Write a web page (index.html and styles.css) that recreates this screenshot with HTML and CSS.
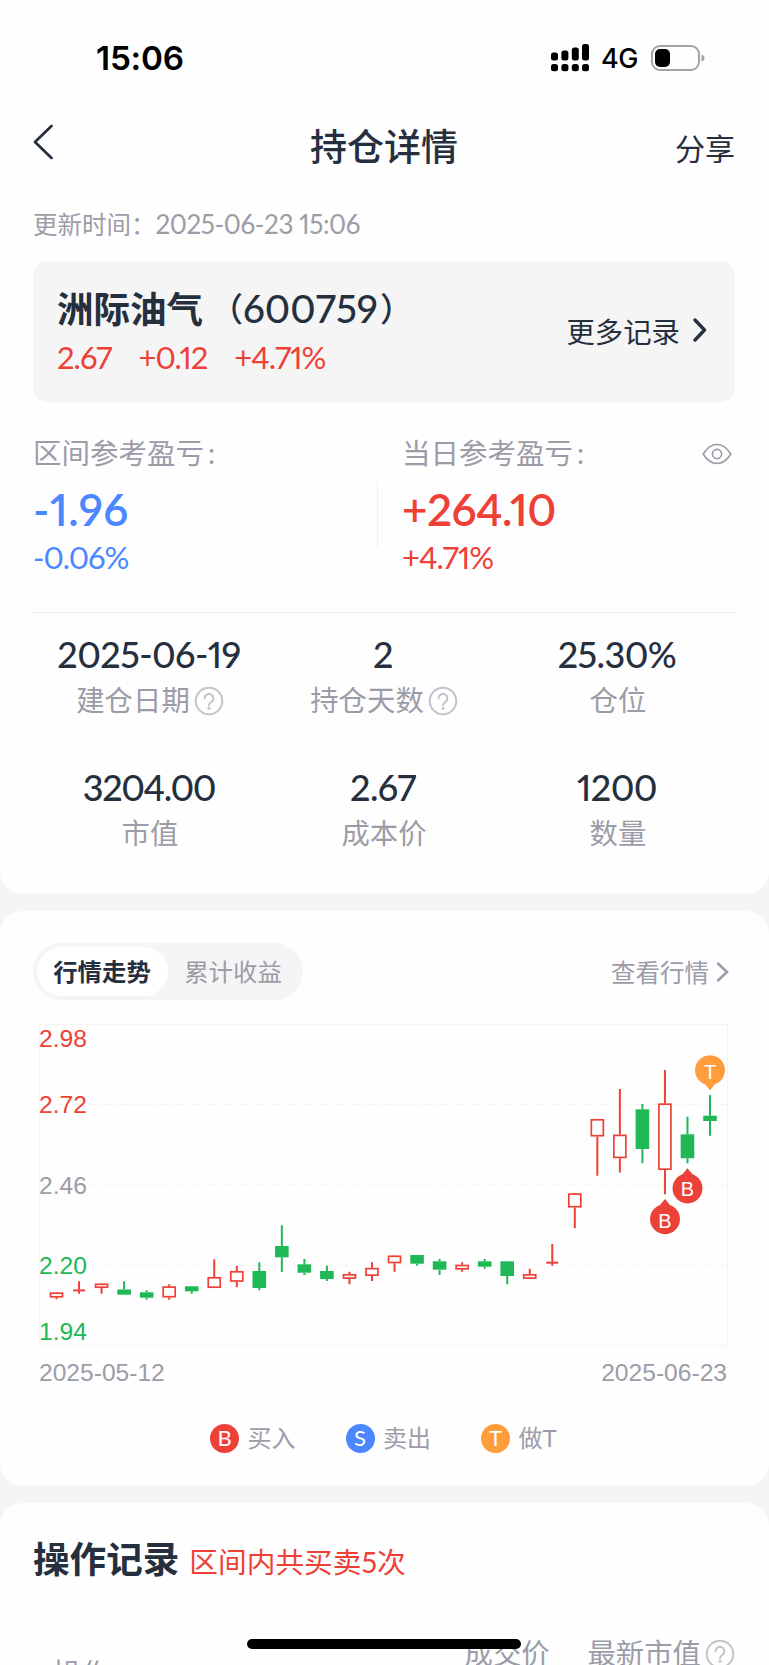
FILE: index.html
```html
<!DOCTYPE html>
<html lang="zh-CN">
<head>
<meta charset="utf-8">
<title>持仓详情</title>
<link rel="stylesheet" href="styles.css">
</head>
<body>
<div class="screen">
  <section class="panel panel-top">
    <div class="status">
      <span class="time">15:06</span>
      <svg class="signal" width="38" height="28" viewBox="0 0 38 28">
        <rect x="0" y="8.5" width="7" height="8" rx="2.5"/><rect x="10.4" y="6.5" width="7" height="10" rx="2.5"/><rect x="20.8" y="3.5" width="7" height="13" rx="2.5"/><rect x="31" y="0" width="7" height="16.5" rx="2.5"/>
        <rect x="0" y="20" width="7" height="7.2" rx="2.5"/><rect x="10.4" y="20" width="7" height="7.2" rx="2.5"/><rect x="20.8" y="20" width="7" height="7.2" rx="2.5"/><rect x="31" y="20" width="7" height="7.2" rx="2.5"/>
      </svg>
      <span class="net">4G</span>
      <svg class="battery" width="54" height="26" viewBox="0 0 54 26">
        <rect x="1" y="1" width="47" height="24" rx="8" fill="none" stroke="#a3a3a3" stroke-width="2"/>
        <rect x="4" y="4" width="15" height="18" rx="5"/>
        <path d="M50.5 9.5q3 1 3 3.5t-3 3.5z" fill="#a3a3a3"/>
      </svg>
    </div>
    <header class="nav">
      <svg width="60" height="36" viewBox="0 0 60 36"><path d="M18.5 2 2 18 18.5 34" fill="none" stroke="#262f3e" stroke-width="2.7" stroke-linecap="round" stroke-linejoin="round"/></svg>
      <h1>持仓详情</h1>
      <span class="share">分享</span>
    </header>
    <p class="updated">更新时间：<span class="d">2025-06-23 15:06</span></p>

    <div class="stock">
      <div>
        <div class="name"><b>洲际油气</b><span class="code"><i>（</i><span class="d">600759</span><i>）</i></span></div>
        <div class="quote"><span>2.67</span><span>+0.12</span><span>+4.71%</span></div>
      </div>
      <div class="more">更多记录<svg width="14" height="24" viewBox="0 0 14 24"><path d="M2 2l9.5 10L2 22" fill="none" stroke="#262f3e" stroke-width="3.3" stroke-linecap="round" stroke-linejoin="round"/></svg></div>
    </div>

    <div class="pnl">
      <div class="pnl-item pnl-left blue">
        <div class="label">区间参考盈亏<i>:</i></div>
        <div class="big wide">-1.96</div>
        <div class="pct tight">-0.06%</div>
      </div>
      <div class="vline"></div>
      <div class="pnl-item red">
        <div class="label">当日参考盈亏<i>:</i>
          <svg class="eye" width="30" height="22" viewBox="0 0 30 22" fill="none" stroke="#9c9ca8" stroke-width="1.6"><path d="M1.2 11Q7 1.5 15 1.5T28.8 11Q23 20.5 15 20.5T1.2 11z" stroke-linejoin="round"/><circle cx="15" cy="11" r="4.6"/></svg>
        </div>
        <div class="big">+264.10</div>
        <div class="pct">+4.71%</div>
      </div>
    </div>

    <div class="stats">
      <div class="stat"><strong>2025-06-19</strong><span>建仓日期<svg class="help" width="30" height="30" viewBox="0 0 30 30"><use href="#q"/></svg></span></div>
      <div class="stat"><strong>2</strong><span>持仓天数<svg class="help" width="30" height="30" viewBox="0 0 30 30"><use href="#q"/></svg></span></div>
      <div class="stat"><strong>25.30%</strong><span>仓位</span></div>
      <div class="stat"><strong class="tight">3204.00</strong><span>市值</span></div>
      <div class="stat"><strong>2.67</strong><span>成本价</span></div>
      <div class="stat"><strong>1200</strong><span>数量</span></div>
    </div>
  </section>

  <section class="panel panel-chart">
    <div class="chart-head">
      <div class="tabs"><span class="tab active">行情走势</span><span class="tab">累计收益</span></div>
      <div class="see">查看行情<svg width="13" height="20" viewBox="0 0 13 20"><path d="M1.5 1l9.5 9-9.5 9" fill="none" stroke="#9c9ca8" stroke-width="2.6"/></svg></div>
    </div>
    <svg class="chart" id="chart" width="769" height="370" viewBox="0 1020 769 370">
      <g fill="none" stroke="#f4f4f5" stroke-width="1.2">
        <rect x="39.5" y="1024.5" width="688" height="321"/>
        <path d="M39.7 1104.5H727M39.7 1185H727M39.7 1265.5H727" stroke-dasharray="11 5.5"/>
      </g>
      <g class="axis">
        <text x="39" y="1047" fill="#ee4036">2.98</text>
        <text x="39" y="1113" fill="#ee4036">2.72</text>
        <text x="39" y="1194" fill="#9c9ca8">2.46</text>
        <text x="39" y="1274" fill="#1fb857">2.20</text>
        <text x="39" y="1340.3" fill="#1fb857">1.94</text>
        <text x="39" y="1381" fill="#9c9ca8">2025-05-12</text>
        <text x="727" y="1381" fill="#9c9ca8" text-anchor="end">2025-06-23</text>
      </g>
      <g id="candles"></g>
      <g class="pin">
        <path d="M710 1090.3l-5-6a15 15 0 1 1 10 0z" fill="#ff9c3c"/><text x="710" y="1078.5">T</text>
        <path d="M687.5 1168.3l-5 6a15 15 0 1 0 10 0z" fill="#ec4138"/><text x="687.5" y="1196.3">B</text>
        <path d="M665 1199l-5 6a15 15 0 1 0 10 0z" fill="#ec4138"/><text x="665" y="1227.5">B</text>
      </g>
    </svg>
    <div class="legend">
      <span><i class="dot buy">B</i>买入</span>
      <span><i class="dot sell">S</i>卖出</span>
      <span><i class="dot both">T</i>做T</span>
    </div>
  </section>

  <section class="panel panel-log">
    <div class="log-title"><h2>操作记录</h2><span>区间内共买卖5次</span></div>
    <div class="log-head"><span class="op">操作</span><span class="price">成交价</span><span class="value">最新市值<svg class="help" width="30" height="30" viewBox="0 0 30 30"><use href="#q"/></svg></span></div>
  </section>
  <div class="home-bar"></div>
</div>
<svg width="0" height="0" class="defs"><defs><g id="q" fill="none" stroke="#c3c3cb" stroke-width="2"><circle cx="15" cy="15" r="13.3"/><path d="M10.6 12.4a4.4 4.4 0 1 1 6.9 3.5q-2.5 1.4-2.5 3.4" stroke-linecap="round"/><circle cx="15" cy="22.2" r="1.5" fill="#c3c3cb" stroke="none"/></g></defs></svg>
<script src="chart.js"></script>
</body>
</html>
```

FILE: styles.css
```css
* { box-sizing: border-box; margin: 0; padding: 0; }
body { background: #f5f5f5; font-family: Lato, "Noto Sans CJK SC", sans-serif; font-variant-numeric: proportional-nums; color: #262f3e; }
i { font-style: normal; }
svg { display: block; flex: none; }
.defs { position: absolute; }
.screen { position: relative; width: 769px; height: 1665px; overflow: hidden; }
.panel { background: #fefefe; border-radius: 23px; }
.panel-top { height: 894px; padding: 0 34px 0 33px; border-radius: 0 0 23px 23px; }

.status { height: 115px; display: flex; align-items: center; font-family: Inter, sans-serif; color: #000; }
.time { margin-left: 63px; width: 455px; font-size: 33.3px; font-weight: 600; letter-spacing: -0.2px; }
.net { margin-left: 12px; width: 50px; font-size: 27px; font-weight: 500; letter-spacing: -0.5px; padding-top: 1px; }

.nav { height: 64px; display: flex; align-items: center; justify-content: space-between; }
.nav svg { margin-top: -11px; }
.nav h1 { font-size: 37px; font-weight: 500; line-height: 64px; }
.share { width: 60px; font-size: 30px; white-space: nowrap; }
.updated { margin-top: 30px; height: 30px; line-height: 30px; font-size: 24.5px; color: #9c9ca8; white-space: nowrap; }
.updated .d { font-size: 26px; letter-spacing: -0.4px; }

.stock { margin-top: 22px; height: 141px; padding: 24px 28px 0 24px; display: flex; justify-content: space-between; background: #f5f5f5; border-radius: 15px; }
.name { display: flex; height: 47px; line-height: 47px; font-size: 36.5px; white-space: nowrap; }
.name b { font-weight: 700; padding-top: 1px; }
.code { display: flex; font-weight: 500; }
.code i { font-size: 33px; }
.code i:first-child { margin-left: 7px; }
.code i:last-child { margin-left: 2px; }
.name .d { font-size: 38.5px; }
.quote { display: flex; gap: 27px; height: 50px; line-height: 50px; font-size: 31px; color: #ee4036; letter-spacing: -1px; }
.more { height: 92px; display: flex; align-items: center; gap: 13px; padding-bottom: 2px; font-size: 28.4px; }

.pnl { margin-top: 36px; height: 175px; display: flex; border-bottom: 1.5px solid #efeff0; }
.pnl-left { width: 344px; }
.pnl-left + .vline { width: 1px; height: 65px; margin-top: 44px; background: #efeff0; margin-right: 24px; }
.pnl-item:last-child { flex: 1; }
.label { height: 30px; line-height: 30px; font-size: 28.5px; color: #9c9ca8; display: flex; align-items: center; }
.label i { margin-left: 4px; }
.eye { margin: 2px 3px 0 auto; }
.big { margin-top: 16px; height: 50px; line-height: 50px; font-size: 44px; font-weight: 600; letter-spacing: -0.5px; }
.big.wide { letter-spacing: 0.5px; }
.pct { margin-top: 8px; height: 30px; line-height: 30px; font-size: 31px; letter-spacing: -1px; }
.blue { color: #4b87ff; }
.red { color: #ee4036; }

.stats { display: grid; grid-template-columns: repeat(3, 234px); grid-auto-rows: 133px; padding-top: 21px; }
.stat { display: flex; flex-direction: column; align-items: center; }
.stat strong { height: 40px; line-height: 40px; font-size: 36px; font-weight: 500; letter-spacing: -0.6px; margin-left: -2px; }
.stat strong.tight { letter-spacing: -1.4px; }
.stat span { margin-top: 11px; height: 30px; display: flex; align-items: center; line-height: 30px; font-size: 28.4px; color: #9c9ca8; }
.help { margin: 1px 0 0 4px; }

.panel-chart { margin-top: 17px; height: 575px; padding-top: 32px; }
.chart-head { display: flex; justify-content: space-between; align-items: center; padding: 0 40px 0 33px; height: 57px; }
.tabs { width: 270px; height: 57px; padding: 4px; display: flex; background: #f5f5f5; border-radius: 29px; }
.tab { width: 131px; line-height: 49px; padding-right: 1px; text-align: center; font-size: 24.4px; color: #9c9ca8; }
.active { background: #fff; border-radius: 25px; color: #262f3e; font-weight: 700; }
.see { display: flex; align-items: center; gap: 7px; font-size: 24.5px; color: #9c9ca8; }
.chart { margin-top: 20px; }
.axis { font-family: "Liberation Sans", Arial, sans-serif; font-size: 24.6px; }
.pin { font-family: "Liberation Sans", Arial, sans-serif; font-size: 20px; text-anchor: middle; }
.pin text { fill: #fff; }
.legend { display: flex; gap: 49.5px; margin: 33px 0 0 210px; height: 30px; align-items: center; font-size: 24px; line-height: 28px; color: #9c9ca8; }
.legend span { display: flex; align-items: center; width: 86px; white-space: nowrap; }
.dot { width: 29px; height: 29px; margin-right: 8.5px; border-radius: 50%; line-height: 28px; text-align: center; font-size: 22px; color: #fff; }
.buy { background: #ec4138; }
.sell { background: #4b87ff; }
.both { background: #ff9c3c; }

.panel-log { margin-top: 17px; height: 240px; padding: 33px 34px 0 33px; }
.log-title { display: flex; align-items: center; height: 46px; white-space: nowrap; }
.log-title h2 { font-size: 36.6px; font-weight: 700; line-height: 46px; }
.log-title span { margin-left: 10px; padding-top: 3px; font-size: 28.7px; color: #ee4036; }
.log-head { display: flex; margin-top: 56px; font-size: 28.4px; line-height: 30px; color: #9c9ca8; }
.op { width: 411px; padding: 20px 0 0 20px; }
.price { width: 144px; padding-left: 21px; }
.value { display: flex; height: 30px; align-items: center; white-space: nowrap; }
.home-bar { position: absolute; left: 247px; top: 1639px; width: 274px; height: 10px; border-radius: 5px; background: #000; }
```

FILE: chart.js
```js
// r = rising (hollow), g = falling (solid): [type, bodyTop, bodyBottom, wickTop, wickBottom]
const data = [
  ['r',1292.4,1297.6,1292.7,1299.3],['r',1289.7,1290.9,1281.3,1293.7],['r',1283.5,1288,1284,1293.7],
  ['g',1289.5,1294.7,1281.3,1294.7],['g',1292.3,1297.7,1290.3,1299.7],['r',1286.3,1297.5,1284.3,1299.7],
  ['g',1286.3,1291.3,1286.3,1293.7],['r',1277,1288,1259.3,1288],['r',1271,1281.8,1265.7,1287.3],
  ['g',1271,1288,1262.3,1290.3],['g',1246,1257.3,1225.3,1272],['g',1264.3,1272.7,1259,1275],
  ['g',1271,1279,1265.7,1281],['r',1274,1278.9,1271.7,1284.3],['r',1267.8,1276,1262.3,1281],
  ['r',1255.5,1263.3,1256,1271.7],['g',1255,1263.7,1255,1265.7],['g',1261.3,1269.7,1259,1275],
  ['r',1264.7,1269.6,1262.3,1271.7],['g',1261.3,1266.7,1259,1268.7],['g',1261.3,1276,1261.3,1284.3],
  ['r',1274,1278.9,1268.7,1278.7],['r',1262,1263.2,1244,1265.7],['r',1193.3,1207.5,1193.9,1228.3],
  ['r',1119,1136.5,1119.6,1175.7],['r',1134.6,1158.2,1089,1172.5],['g',1109.3,1149,1104,1163.3],
  ['r',1103.4,1170,1070,1194.3],['g',1134.3,1158.3,1116.7,1163.3],['g',1115.7,1121,1095,1135.7]
];
let out = '';
data.forEach(([t, a, b, hi, lo], i) => {
  const x = 56.5 + i * 22.535;
  const c = t === 'r' ? '#ee4036' : '#1fb857';
  out += `<path d="M${x} ${hi}V${a}M${x} ${b}V${lo}" stroke="${c}" stroke-width="2"/>`;
  if (t === 'g') {
    out += `<rect x="${x - 6.8}" y="${a}" width="13.6" height="${b - a}" fill="${c}"/>`;
  } else if (b - a < 2) {
    out += `<rect x="${x - 6}" y="${a - 0.3}" width="12" height="2" fill="${c}"/>`;
  } else {
    out += `<rect x="${x - 6}" y="${a + 0.8}" width="12" height="${b - a - 1.6}" fill="none" stroke="${c}" stroke-width="1.7"/>`;
  }
});
document.getElementById('candles').innerHTML = out;
```
